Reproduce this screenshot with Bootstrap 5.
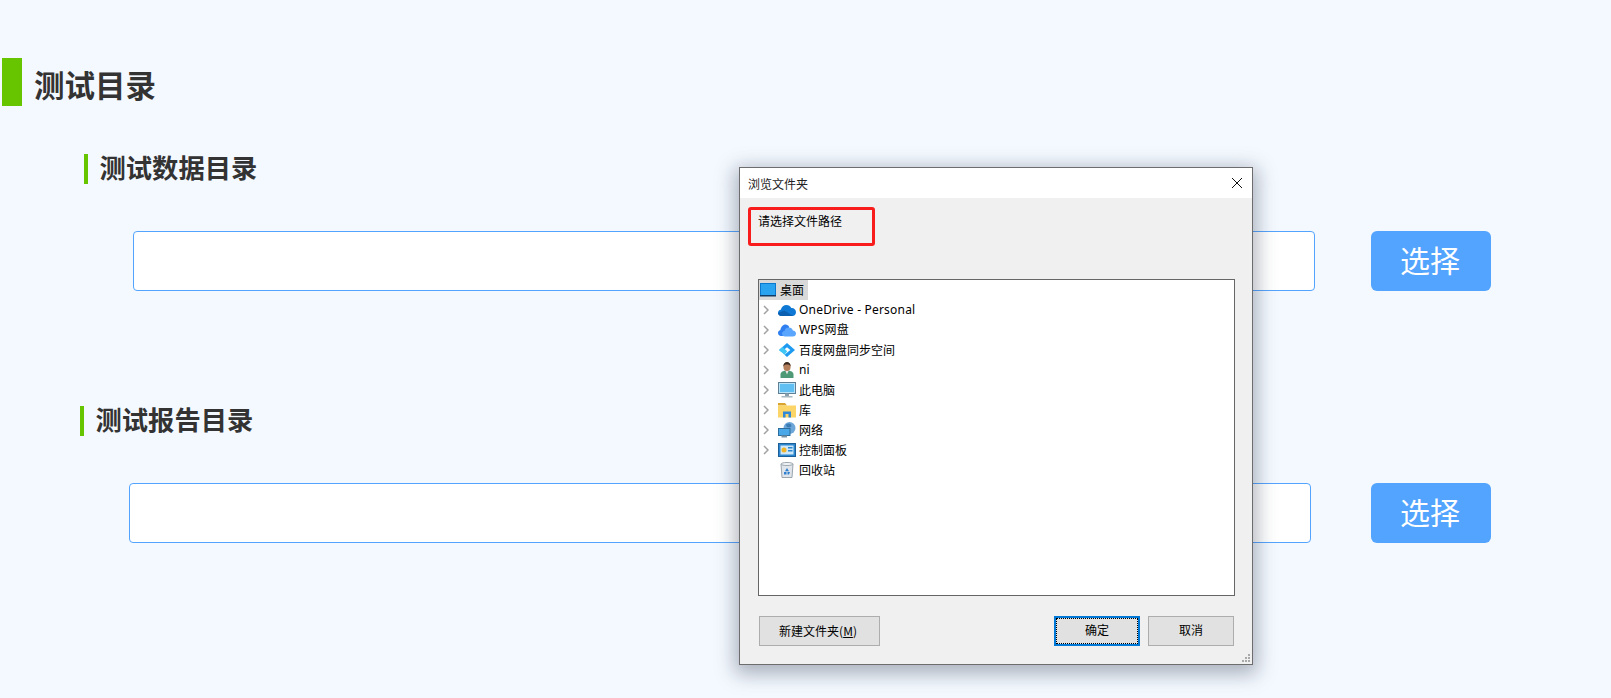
<!DOCTYPE html>
<html lang="zh">
<head>
<meta charset="utf-8">
<title>测试目录</title>
<link href="https://cdn.jsdelivr.net/npm/bootstrap@5.3.0/dist/css/bootstrap.min.css" rel="stylesheet">
<style>
html,body{height:100%}
body{background:#f4f9ff;font-family:"Noto Sans CJK SC","Liberation Sans",sans-serif;overflow:hidden;position:relative;color:#333}
.main-head{margin:58px 0 0 2px;height:48px;gap:12px}
.main-bar{width:20px;height:48px;background:#67c500}
.main-title{font-size:30.5px;font-weight:700;line-height:48px;margin:4px 0 0;color:#333}
.sub-head{height:30px;gap:11.5px}
.sub-bar{width:4px;height:30px;background:#67c500}
.sub-title{font-size:26.3px;font-weight:700;line-height:30px;margin:0 0 4px;color:#333}
.sub-a{margin:48px 0 0 84px}
.sub-b{margin:0 0 0 80px}
.path-row{height:60px;margin-top:47px}
.path-a{margin-left:133px;margin-bottom:115px}
.path-b{margin-left:129px}
.path-input.form-control{height:60px;border:1px solid #53a4ff;border-radius:4px;background:#fff;padding:0 12px}
.input-a{width:1182px;margin-right:56px}
.input-b{width:1182px;margin-right:60px}
.pick-btn.btn{width:120px;height:60px;background:#53a4ff;border:0;border-radius:6px;color:#fff;font-size:30px;line-height:1;padding:0 2px 5px 0}
.win{position:absolute;left:739px;top:167px;width:514px;height:498px;background:#f0f0f0;border:1px solid #6d6d6d;box-shadow:0 5px 18px 4px rgba(60,70,90,.4);font-size:12px;color:#000;font-family:"Noto Sans CJK SC",sans-serif}
.win-bar{height:30px;background:#fff;padding:0 8px;line-height:29px;color:#222}
.win-close{width:16px;height:16px;margin-right:-1px}
.win-body{padding:9px 18px 0 8px}
.prompt{width:127px;height:39px;border:3px solid #f81c1c;border-radius:3px;padding:2px 0 0 7px;line-height:18px;margin-bottom:33px}
.tree{margin-left:10px;width:477px;height:317px;background:#fff;border:1px solid #666;overflow:hidden}
.tree-row{height:20px;line-height:20px;white-space:nowrap}
.tree-root{background:#d9d9d9;width:49px;height:20px;gap:4px;line-height:17px;padding-left:1px}
.tree-root span{margin-bottom:2px}
.tree-row svg{flex:none}
.chev{width:19px;flex:none;padding-left:4px;display:flex}
.ico{width:18px;height:16px;margin-right:3px;flex:none}
.lat{font-family:"Noto Sans","Noto Sans CJK SC",sans-serif;letter-spacing:.2px}
.win-foot{padding:20px 18px 0 19px}
.dlg-btn.btn{height:30px;border:1px solid #adadad;background:#e1e1e1;border-radius:0;font-size:12px;color:#000;padding:0 0 3px;line-height:24px}
.btn-new.btn{width:121px;padding:0 3px 1px 0}
.btn-ok,.btn-no{width:86px}
.btn-ok.btn{border:2px solid #0078d7;position:relative;margin-right:8px}
.btn-ok.btn::after{content:"";position:absolute;inset:0;border:1px dotted #000}
.u-key{text-decoration:underline}
.grip{position:absolute;right:1px;bottom:1px;width:11px;height:11px}
</style>
</head>
<body>
<div class="d-flex align-items-center main-head"><div class="main-bar"></div><h1 class="main-title">测试目录</h1></div>

<div class="d-flex align-items-center sub-head sub-a"><div class="sub-bar"></div><h2 class="sub-title">测试数据目录</h2></div>
<div class="d-flex path-row path-a"><input class="form-control path-input input-a" type="text"><button class="btn pick-btn" type="button">选择</button></div>

<div class="d-flex align-items-center sub-head sub-b"><div class="sub-bar"></div><h2 class="sub-title">测试报告目录</h2></div>
<div class="d-flex path-row path-b"><input class="form-control path-input input-b" type="text"><button class="btn pick-btn" type="button">选择</button></div>

<div class="win">
  <div class="win-bar d-flex justify-content-between align-items-center">
    <span>浏览文件夹</span>
    <svg class="win-close" viewBox="0 0 16 16"><path d="M3 3 13 13M13 3 3 13" stroke="#111" stroke-width="1" fill="none"/></svg>
  </div>
  <div class="win-body">
    <div class="prompt">请选择文件路径</div>
    <div class="tree">
      <div class="tree-row d-flex"><div class="tree-root d-flex align-items-center">
        <svg width="16" height="14" viewBox="0 0 16 14"><rect x="0.500" y="0.500" width="15" height="12" fill="#29a3f0" stroke="#0b78d0"/><rect x="0" y="12" width="16" height="1.500" fill="#123a66"/></svg>
        <span>桌面</span></div></div>

      <div class="tree-row d-flex align-items-center"><span class="chev"><svg width="6" height="10" viewBox="0 0 6 10"><path d="M1 1 5 5 1 9" stroke="#a0a0a0" stroke-width="1.500" fill="none"/></svg></span>
        <svg class="ico" viewBox="0 0 18 16"><path d="M3.500 14C1.300 14 0 12.400 0 10.900 0 9.300 1.200 8 2.800 7.800 3.500 4.700 5.800 3 8.500 3c2.100 0 3.900 1.100 4.800 3 2.500-.3 4.700 1.500 4.700 4.200 0 2.100-1.600 3.800-3.700 3.800Z" fill="#0f78d4"/><path d="M3.500 14C1.300 14 0 12.400 0 10.900L6.500 8.500 15 14Z" fill="#0a5fb0"/></svg><span class="lat">OneDrive - Personal</span></div>

      <div class="tree-row d-flex align-items-center"><span class="chev"><svg width="6" height="10" viewBox="0 0 6 10"><path d="M1 1 5 5 1 9" stroke="#a0a0a0" stroke-width="1.500" fill="none"/></svg></span>
        <svg class="ico" viewBox="0 0 18 16"><path d="M3 14C1.300 14 0 12.600 0 11 0 9.500 1 8.300 2.400 8 2.800 5 4.800 2.500 7.500 2.500c1.700 0 3.100 1 3.800 2.500L8 14Z" fill="#2f7ff0"/><path d="M7 14.500c-1.800 0-3-1.300-3-2.800 0-1.400 1-2.600 2.500-2.800C7 6.600 8.800 5.500 10.800 5.500c2 0 3.600 1.200 4.100 3 1.700.2 3.100 1.400 3.100 2.900 0 1.700-1.300 3.100-3 3.100Z" fill="#5aa6ff"/></svg><span class="lat">WPS网盘</span></div>

      <div class="tree-row d-flex align-items-center"><span class="chev"><svg width="6" height="10" viewBox="0 0 6 10"><path d="M1 1 5 5 1 9" stroke="#a0a0a0" stroke-width="1.500" fill="none"/></svg></span>
        <svg class="ico" viewBox="0 0 18 16"><path d="M9 1 17 8 9 15 6.500 12.800 12.300 8 9 5.200 5.700 8 3.500 10 1 8Z" fill="#1e9af0"/><path d="M1 8 4.500 5 7 7.300 9.200 9.300 6.500 12.800Z" fill="#3ec6f5"/></svg><span>百度网盘同步空间</span></div>

      <div class="tree-row d-flex align-items-center"><span class="chev"><svg width="6" height="10" viewBox="0 0 6 10"><path d="M1 1 5 5 1 9" stroke="#a0a0a0" stroke-width="1.500" fill="none"/></svg></span>
        <svg class="ico" viewBox="0 0 18 16"><path d="M2.500 16V12.500c0-2.400 2.400-4 6.500-4s6.500 1.600 6.500 4V16Z" fill="#4f9a76"/><path d="M7.300 8.500h3.400L9 12.500Z" fill="#e8e8e8"/><ellipse cx="9" cy="4.800" rx="3.600" ry="4.300" fill="#b57f5c"/><path d="M5.300 4.500C5.300 1.600 7 0 9 0s3.700 1.600 3.700 4.500c-1-1.700-2.200-2-3.700-2s-2.700.3-3.700 2Z" fill="#3a2a20"/></svg><span class="lat">ni</span></div>

      <div class="tree-row d-flex align-items-center"><span class="chev"><svg width="6" height="10" viewBox="0 0 6 10"><path d="M1 1 5 5 1 9" stroke="#a0a0a0" stroke-width="1.500" fill="none"/></svg></span>
        <svg class="ico" viewBox="0 0 18 16"><rect x="0.500" y="0.500" width="17" height="11" fill="#b8e4fa" stroke="#5f7f96"/><rect x="2" y="2" width="14" height="8" fill="#62bff2"/><rect x="7" y="11.500" width="4" height="2.500" fill="#8aa0ad"/><rect x="3.500" y="14" width="11" height="1.500" fill="#a9b7c0"/></svg><span>此电脑</span></div>

      <div class="tree-row d-flex align-items-center"><span class="chev"><svg width="6" height="10" viewBox="0 0 6 10"><path d="M1 1 5 5 1 9" stroke="#a0a0a0" stroke-width="1.500" fill="none"/></svg></span>
        <svg class="ico" viewBox="0 0 18 16"><path d="M0 1h7l2 2.500H0Z" fill="#d9a52e"/><rect x="0" y="3.500" width="18" height="12" fill="#fbd567"/><path d="M5 15.500V9.500h8v6h-2.500V12h-3v3.500Z" fill="#2f88d8"/></svg><span>库</span></div>

      <div class="tree-row d-flex align-items-center"><span class="chev"><svg width="6" height="10" viewBox="0 0 6 10"><path d="M1 1 5 5 1 9" stroke="#a0a0a0" stroke-width="1.500" fill="none"/></svg></span>
        <svg class="ico" viewBox="0 0 18 16"><circle cx="11.500" cy="6" r="6" fill="#6da6d8"/><path d="M8 2.500c2-1.500 4-1 5 0s0 3-2 3-3-1-3-3Z" fill="#3c7cb4"/><rect x="0.500" y="6.500" width="11.500" height="7" fill="#4aa8e8" stroke="#2c6f9f"/><rect x="3.500" y="13.500" width="5.500" height="2" fill="#7b92a3"/></svg><span>网络</span></div>

      <div class="tree-row d-flex align-items-center"><span class="chev"><svg width="6" height="10" viewBox="0 0 6 10"><path d="M1 1 5 5 1 9" stroke="#a0a0a0" stroke-width="1.500" fill="none"/></svg></span>
        <svg class="ico" viewBox="0 0 18 16"><rect x="0.500" y="1.500" width="17" height="13" fill="#2a86cf" stroke="#1c5f99"/><rect x="2.500" y="3.500" width="13" height="9" fill="#cfe7f7"/><circle cx="6" cy="8" r="2.500" fill="#f0b429"/><rect x="10" y="5" width="4.500" height="1.500" fill="#2a86cf"/><rect x="10" y="8" width="4.500" height="1.500" fill="#2a86cf"/></svg><span>控制面板</span></div>

      <div class="tree-row d-flex align-items-center"><span class="chev"></span>
        <svg class="ico" viewBox="0 0 18 16"><path d="M3 2h12L14 15.500H4Z" fill="#dfe5ea" stroke="#9aa5ae"/><ellipse cx="9" cy="2" rx="6" ry="1.500" fill="#f3f5f7" stroke="#9aa5ae"/><path d="M9 6 11 9.300H7ZM6 10h2.500v2.500H6ZM9.500 10H12l-1 2.500H9.500Z" fill="#2f7fd0"/></svg><span>回收站</span></div>
    </div>
  </div>
  <div class="win-foot d-flex justify-content-between">
    <button class="btn dlg-btn btn-new" type="button">新建文件夹(<span class="u-key">M</span>)</button>
    <div class="d-flex">
      <button class="btn dlg-btn btn-ok" type="button">确定</button>
      <button class="btn dlg-btn btn-no" type="button">取消</button>
    </div>
  </div>
  <svg class="grip" viewBox="0 0 11 11"><g fill="#a9a9a9"><rect x="8" y="2" width="2" height="2"/><rect x="5" y="5" width="2" height="2"/><rect x="8" y="5" width="2" height="2"/><rect x="2" y="8" width="2" height="2"/><rect x="5" y="8" width="2" height="2"/><rect x="8" y="8" width="2" height="2"/></g></svg>
</div>
</body>
</html>
